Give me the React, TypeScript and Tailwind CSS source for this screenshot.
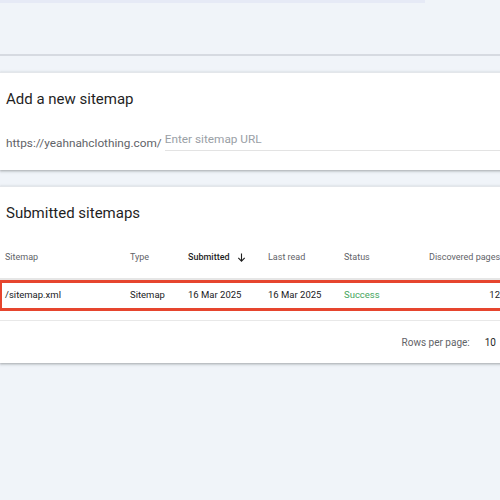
import React from 'react';

const cols = ['w-[125px]', 'w-[58px]', 'w-[80px]', 'w-[76px]', 'w-[85px]', 'w-[120px]'];

export default function App() {
    return (
        <div className="w-[500px] h-[500px] overflow-hidden bg-[#f0f4f9] font-['Roboto',sans-serif] text-[#1f1f1f]">
            {/* franja superior (resto de la tarjeta anterior) */}
            <div className="h-[3px] w-[425px] bg-[#e6eaf6]"></div>
            <div className="h-[53px] border-b-2 border-[#d6dae1]"></div>

            {/* AGREGAR SITEMAP */}
            <div className="mt-[16px] w-[520px] bg-white border-t border-[#e3e6ea] shadow-[0_1px_2px_rgba(60,64,67,0.3),0_1px_3px_1px_rgba(60,64,67,0.12)]">
                <div className="h-[97px] pl-[6px] pt-[16px]">
                    <h2 className="text-[15px] leading-[20px]">Add a new sitemap</h2>
                    <div className="mt-[22px] flex items-end text-[11.8px] leading-[16px]">
                        <span className="text-[#5f6368]">https://yeahnahclothing.com/</span>
                        <div className="ml-[3px] flex-1 border-b border-[#e3e3e3] pb-[3px]">
                            <span className="text-[#9aa0a6]">Enter sitemap URL</span>
                        </div>
                    </div>
                </div>
            </div>

            {/* SITEMAPS ENVIADOS */}
            <div className="mt-[16px] w-[520px] bg-white border-t border-[#e3e6ea] shadow-[0_1px_2px_rgba(60,64,67,0.3),0_1px_3px_1px_rgba(60,64,67,0.12)]">
                <div className="pl-[6px] pt-[16px] h-[43px]">
                    <h2 className="text-[15px] leading-[20px]">Submitted sitemaps</h2>
                </div>
                <div className="h-[50px] pl-[5px] pt-[22px] flex items-start border-b-2 border-[#e6e6e6] text-[9px] leading-[11px] text-[#5f6368]">
                    <div className={`${cols[0]} shrink-0`}>Sitemap</div>
                    <div className={`${cols[1]} shrink-0`}>Type</div>
                    <div className={`${cols[2]} shrink-0 flex items-center font-medium text-[#1f1f1f]`}>
                        Submitted
                        <svg className="ml-[6px]" width="11" height="11" viewBox="0 0 24 24" fill="none" stroke="#1f1f1f" strokeWidth="2.4">
                            <path d="M12 3v17M5 13l7 7 7-7" />
                        </svg>
                    </div>
                    <div className={`${cols[3]} shrink-0`}>Last read</div>
                    <div className={`${cols[4]} shrink-0`}>Status</div>
                    <div className={`${cols[5]} shrink-0 whitespace-nowrap`}>Discovered pages</div>
                </div>
                <div className="h-[31px] flex items-center border-t-[3px] border-b-[3px] border-l-2 border-[#e6452e] pl-[3px] text-[9.5px] text-[#202124]">
                    <div className={`${cols[0]} shrink-0`}>/sitemap.xml</div>
                    <div className={`${cols[1]} shrink-0`}>Sitemap</div>
                    <div className={`${cols[2]} shrink-0`}>16 Mar 2025</div>
                    <div className={`${cols[3]} shrink-0`}>16 Mar 2025</div>
                    <div className={`${cols[4]} shrink-0 text-[#43a55c]`}>Success</div>
                    <div className="w-[71px] shrink-0 text-right">12</div>
                </div>
                <div className="h-[10px] border-b border-[#e8e8e8]"></div>
                <div className="h-[42px] flex items-center text-[10px] text-[#5f6368]">
                    <div className="w-[500px] flex justify-end pr-[4px]">
                        <span>Rows per page:</span>
                        <span className="ml-[15px] text-[#1f1f1f]">10</span>
                    </div>
                </div>
            </div>
        </div>
    );
}
